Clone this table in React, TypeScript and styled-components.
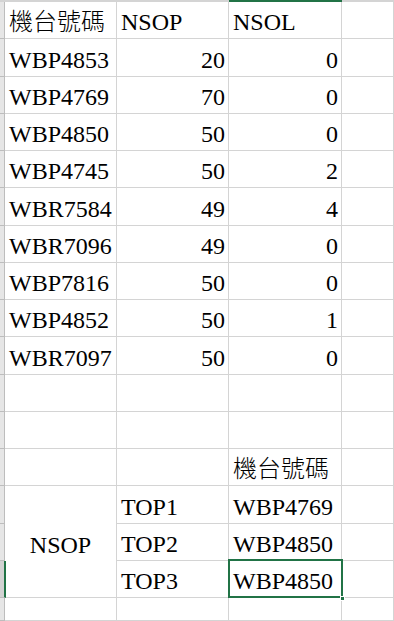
import styled, { createGlobalStyle, css } from "styled-components";

const GlobalStyle = createGlobalStyle`
  html, body {
    margin: 0;
    padding: 0;
    background: #ffffff;
    overflow: hidden;
  }
`;

const cl = {
  grid: "#d4d4d4",
  header: "#e6e6e6",
  headerOn: "#d2d2d2",
  headerLine: "#bdbdbd",
  green: "#217346",
  text: "#000000",
};

type Cellv = string | number;
interface IRow {
  cells: Cellv[];
}

// 16 visible rows under the column header strip
const rows: IRow[] = [
  { cells: ["機台號碼", "NSOP", "NSOL"] },
  { cells: ["WBP4853", 20, 0] },
  { cells: ["WBP4769", 70, 0] },
  { cells: ["WBP4850", 50, 0] },
  { cells: ["WBP4745", 50, 2] },
  { cells: ["WBR7584", 49, 4] },
  { cells: ["WBR7096", 49, 0] },
  { cells: ["WBP7816", 50, 0] },
  { cells: ["WBP4852", 50, 1] },
  { cells: ["WBR7097", 50, 0] },
  { cells: ["", "", ""] },
  { cells: ["", "", ""] },
  { cells: ["", "", "機台號碼"] },
];

const tops = [
  { label: "TOP1", id: "WBP4769" },
  { label: "TOP2", id: "WBP4850" },
  { label: "TOP3", id: "WBP4850" },
];

const App = () => {
  return (
    <>
      <GlobalStyle />
      <Sheet>
        {/* column header strip */}
        <ColHead />
        <ColHead />
        <ColHead />
        <ColHead $active />
        <ColHead />

        {rows.map((row, r) => (
          <Row key={r} row={row} />
        ))}

        {/* summary block with merged NSOP cell */}
        <RowHead />
        <MergedCell>NSOP</MergedCell>
        <Cell>{tops[0].label}</Cell>
        <Cell>{tops[0].id}</Cell>
        <Cell />
        <RowHead />
        <Cell>{tops[1].label}</Cell>
        <Cell>{tops[1].id}</Cell>
        <Cell />
        <RowHead $active />
        <Cell>{tops[2].label}</Cell>
        <SelectedCell>{tops[2].id}</SelectedCell>
        <Cell />

        <RowHead />
        <Cell />
        <Cell />
        <Cell />
        <Cell />
      </Sheet>
    </>
  );
};

const Row = ({ row }: { row: IRow }) => (
  <>
    <RowHead />
    {row.cells.map((v, i) => (
      <Cell key={i} $num={typeof v === "number"}>
        {v}
      </Cell>
    ))}
    <Cell />
  </>
);

const Sheet = styled.div`
  width: 394px;
  height: 621px;
  display: grid;
  grid-template-columns: 5px 112px 112px 113px 1fr;
  grid-template-rows: 2px repeat(16, 37.25px) 1fr;
  font-family: "Liberation Serif", "Noto Sans CJK TC", serif;
  font-size: 24px;
  font-weight: 300;
  color: ${cl.text};
  overflow: hidden;
`;

const ColHead = styled.div<{ $active?: boolean }>`
  background: ${(p) => (p.$active ? cl.green : cl.grid)};
`;

const RowHead = styled.div<{ $active?: boolean }>`
  background: ${(p) => (p.$active ? cl.headerOn : cl.header)};
  border-right: 1px solid ${cl.headerLine};
  border-bottom: 1px solid ${cl.headerLine};
  ${(p) =>
    p.$active &&
    css`
      border-right: 2px solid ${cl.green};
      margin-right: -1px;
    `}
`;

const cellBase = css`
  box-sizing: border-box;
  border-right: 1px solid ${cl.grid};
  border-bottom: 1px solid ${cl.grid};
  line-height: 24px;
  white-space: nowrap;
  overflow: visible;
`;

const Cell = styled.div<{ $num?: boolean }>`
  ${cellBase};
  display: flex;
  align-items: flex-end;
  justify-content: ${(p) => (p.$num ? "flex-end" : "flex-start")};
  padding: 0 3px 4px 4px;
`;

const MergedCell = styled.div`
  ${cellBase};
  grid-row: span 3;
  display: flex;
  align-items: center;
  justify-content: center;
  padding-top: 6px;
`;

const SelectedCell = styled(Cell)`
  position: relative;
  &::after {
    content: "";
    position: absolute;
    inset: -2px -2px -1px -1px;
    border: 2px solid ${cl.green};
    pointer-events: none;
  }
  &::before {
    content: "";
    position: absolute;
    right: -4px;
    bottom: -4px;
    width: 5px;
    height: 5px;
    background: ${cl.green};
    border: 1px solid #ffffff;
    box-sizing: border-box;
    z-index: 1;
  }
`;

export default App;
